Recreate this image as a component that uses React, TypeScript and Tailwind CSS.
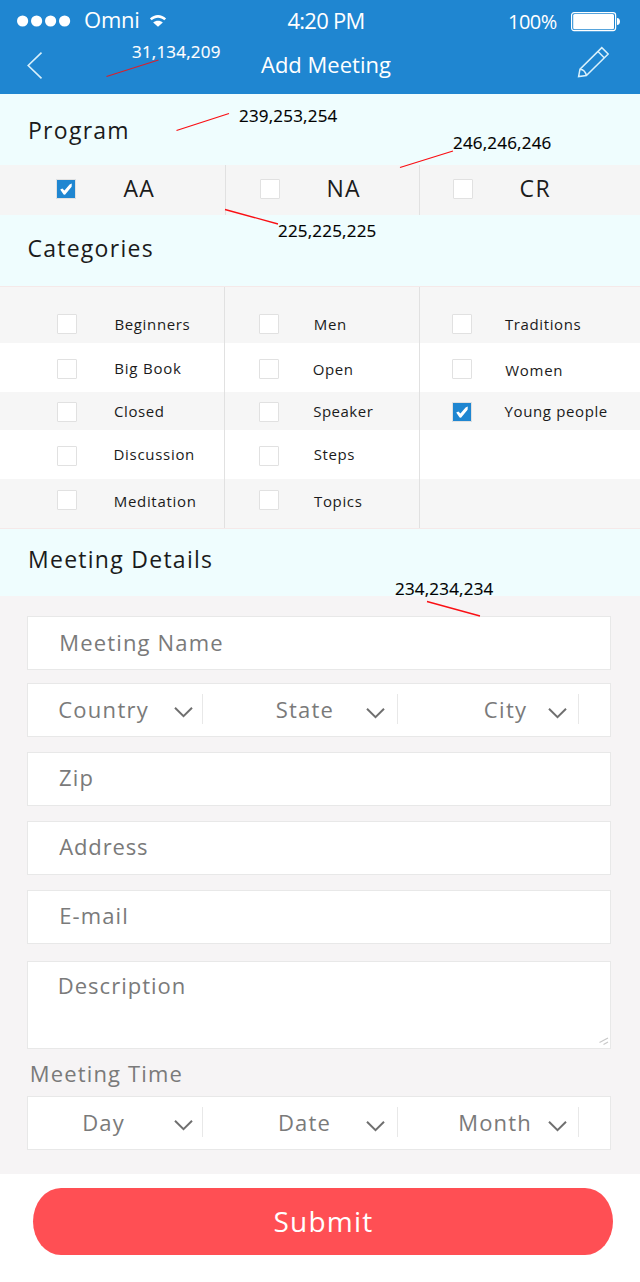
import React from "react";

type Item = { label: string; box: string; pos: string; checked?: boolean };

const programs: Item[] = [
  { label: "AA", box: "ml-[56px]", pos: "ml-[47.5px]", checked: true },
  { label: "NA", box: "ml-[34px]", pos: "ml-[46.5px]" },
  { label: "CR", box: "ml-[33px]", pos: "ml-[46.6px]" },
];

const rows: { row: string; boxTop: string; items: (Item | null)[] }[] = [
  {
    row: "h-[56px] bg-[#f6f6f6]",
    boxTop: "mt-[27px]",
    items: [
      { label: "Beginners", box: "ml-[57px]", pos: "ml-[37.4px] mt-[27px] tracking-[0.65px]" },
      { label: "Men", box: "ml-[34px]", pos: "ml-[34.7px] mt-[27px] tracking-[0.7px]" },
      { label: "Traditions", box: "ml-[32px]", pos: "ml-[33px] mt-[27px] tracking-[0.6px]" },
    ],
  },
  {
    row: "h-[49px] bg-white",
    boxTop: "mt-4",
    items: [
      { label: "Big Book", box: "ml-[57px]", pos: "ml-[37.2px] mt-[15px] tracking-[0.8px]" },
      { label: "Open", box: "ml-[34px]", pos: "ml-[33.7px] mt-[16px] tracking-[0.6px]" },
      { label: "Women", box: "ml-[32px]", pos: "ml-[33.3px] mt-[17px] tracking-[0.7px]" },
    ],
  },
  {
    row: "h-[38px] bg-[#f6f6f6]",
    boxTop: "mt-2.5",
    items: [
      { label: "Closed", box: "ml-[57px]", pos: "ml-[37px] mt-[9px] tracking-[0.6px]" },
      { label: "Speaker", box: "ml-[34px]", pos: "ml-[34.2px] mt-[9px] tracking-[0.5px]" },
      { label: "Young people", box: "ml-[32px]", pos: "ml-[32.5px] mt-[9px] tracking-[0.63px]", checked: true },
    ],
  },
  {
    row: "h-[49px] bg-white",
    boxTop: "mt-4",
    items: [
      { label: "Discussion", box: "ml-[57px]", pos: "ml-[36.5px] mt-[14px] tracking-[0.7px]" },
      { label: "Steps", box: "ml-[34px]", pos: "ml-[34.8px] mt-[14px] tracking-[0.6px]" },
      null,
    ],
  },
  {
    row: "h-[49px] bg-[#f6f6f6]",
    boxTop: "mt-[11px]",
    items: [
      { label: "Meditation", box: "ml-[57px]", pos: "ml-[36.7px] mt-[12px] tracking-[0.7px]" },
      { label: "Topics", box: "ml-[34px]", pos: "ml-[35px] mt-[12px] tracking-[0.65px]" },
      null,
    ],
  },
];

const swatches = [
  { text: "31,134,209", cls: "left-[132px] top-[40px] text-white" },
  { text: "239,253,254", cls: "left-[239px] top-[104px] text-black" },
  { text: "246,246,246", cls: "left-[453px] top-[131px] text-black" },
  { text: "225,225,225", cls: "left-[278px] top-[219px] text-black" },
  { text: "234,234,234", cls: "left-[395px] top-[577px] text-black" },
];

function Checkbox({ checked, className = "" }: { checked?: boolean; className?: string }) {
  return (
    <span
      className={`flex size-5 shrink-0 rounded-[1px] border border-[#e1e1e1] ${
        checked ? "bg-[#1f86d1]" : "bg-white"
      } ${className}`}
    >
      {checked && (
        <svg viewBox="0 0 18 18" className="size-[18px]">
          <path d="M3.2 9.4 5.4 8.6 7.4 10.6 12.6 4.6 14.8 3.4 14.6 6.8 8 14.8 6.6 14.6Z" fill="#fff" />
        </svg>
      )}
    </span>
  );
}

function Chevron({ className }: { className: string }) {
  return (
    <svg viewBox="0 0 20 12" className={`h-3 w-5 shrink-0 ${className}`} fill="none">
      <path d="M2 1.8 10.5 10.2 19 1.8" stroke="#6f6f6f" strokeWidth="2" />
    </svg>
  );
}

function SectionTitle({ children, className }: { children: string; className: string }) {
  return (
    <h2 className={`bg-[#effdfe] text-[23px] leading-8 tracking-[1.27px] text-[#1b1b1b] ${className}`}>{children}</h2>
  );
}

function Field({ children, className }: { children: string; className: string }) {
  return (
    <div className={`border border-[#e8e8e8] bg-white text-[22px] leading-[30px] ${className}`}>{children}</div>
  );
}

function SelectRow({ cells, className = "" }: { cells: { label: string; pos: string }[]; className?: string }) {
  return (
    <div
      className={`grid h-[54px] grid-cols-[175px_195px_181px] border border-[#e8e8e8] bg-white text-[22px] leading-[30px] ${className}`}
    >
      {cells.map((c, i) => (
        <div key={c.label} className="mt-2.5 flex h-[30px] items-start justify-between border-r border-[#e8e8e8]">
          <span className={c.pos}>{c.label}</span>
          <Chevron
            className={i === 0 ? "mt-3 mr-[9px]" : i === 1 ? "mt-[13px] mr-3" : "mt-[13px] mr-[11px]"}
          />
        </div>
      ))}
    </div>
  );
}

export default function App() {
  return (
    <div className="relative h-[1282px] w-[640px] overflow-hidden bg-white font-['Open_Sans',sans-serif] whitespace-nowrap">
      <header className="h-[94px] bg-[#1f86d1] text-[22px] leading-[30px] text-white">
        <div className="flex h-[42px] items-start">
          <svg viewBox="0 0 54 12" className="mt-[14.5px] ml-[17px] h-3 w-[54px]" fill="#fff">
            <circle cx="5.6" cy="6" r="5.6" />
            <circle cx="19.6" cy="6" r="5.6" />
            <circle cx="33.6" cy="6" r="5.6" />
            <circle cx="47.6" cy="6" r="5.6" />
          </svg>
          <span className="mt-1 ml-[13px] w-[58px] tracking-[-0.2px]">Omni</span>
          <svg viewBox="0 0 18 13" className="mt-[14px] ml-[7px] h-[13px] w-[18px]" fill="#fff">
            <path d="M.9 4.6C5.4-.3 12.6-.3 17.1 4.6L15.3 6.2C11.8 2.8 6.2 2.8 2.7 6.2Z" />
            <path d="M4.2 8.4C6.8 6.3 11.2 6.3 13.8 8.4L9 12.8Z" />
          </svg>
          <span className="mt-[5px] ml-[120.5px] w-[90px] tracking-[-0.75px]">4:20 PM</span>
          <span className="mt-2 ml-[130.5px] w-[60px] text-[20px] leading-[27px] tracking-[-0.5px]">100%</span>
          <svg viewBox="0 0 50 20" className="mt-3 ml-[3px] h-5 w-[50px]" fill="none">
            <rect x=".6" y=".6" width="44" height="18" rx="2.5" stroke="#fff" strokeWidth="1.2" />
            <rect x="2.2" y="2" width="40.8" height="15.2" rx="1.5" fill="#fff" />
            <path d="M46 6C50 6 50 13 46 13Z" fill="#fff" />
          </svg>
        </div>
        <div className="flex items-start">
          <svg viewBox="0 0 16 28" className="mt-[9.5px] ml-[27px] h-7 w-4" fill="none">
            <path d="M14.5 .6 1.2 13.5 14.5 26.4" stroke="#d8f0fb" strokeWidth="1.6" />
          </svg>
          <h1 className="mt-[7px] ml-[218px] w-[316px]">Add Meeting</h1>
          <svg viewBox="0 0 32 32" className="mt-1 h-8 w-8" fill="none" stroke="#d8f0fb" strokeWidth="1.5">
            <path d="M1.6 30.6 3 23.2 24.8 1.6 31.2 8 9.4 29.6ZM21 5.4 27.2 11.8M3 23.2C5.8 23.4 8.6 26 9.4 29.6" />
          </svg>
        </div>
      </header>

      <SectionTitle className="h-[71px] pt-5 pl-[28px]">Program</SectionTitle>
      <div className="grid h-[50px] grid-cols-[226px_194px_220px] bg-[#f5f5f5] text-[23px] leading-8 text-[#1b1b1b]">
        {programs.map((p, i) => (
          <label key={p.label} className={`flex items-start ${i < 2 ? "border-r border-[#e1e1e1]" : ""}`}>
            <Checkbox checked={p.checked} className={`mt-3.5 ${p.box}`} />
            <span className={`mt-[7px] tracking-[1.3px] ${p.pos}`}>{p.label}</span>
          </label>
        ))}
      </div>

      <SectionTitle className="h-[71px] pt-[17px] pl-[27.4px]">Categories</SectionTitle>
      <div className="border-y border-[#f5e9e9] text-[15px] leading-5 text-[#1b1b1b]">
        {rows.map((r, n) => (
          <div key={n} className={`grid grid-cols-[225px_195px_220px] ${r.row}`}>
            {r.items.map((it, i) => (
              <label key={i} className={`flex items-start ${i < 2 ? "border-r border-[#e1e1e1]" : ""}`}>
                {it && <Checkbox checked={it.checked} className={`${r.boxTop} ${it.box}`} />}
                {it && <span className={it.pos}>{it.label}</span>}
              </label>
            ))}
          </div>
        ))}
      </div>

      <SectionTitle className="h-[67px] pt-3.5 pl-[28px]">Meeting Details</SectionTitle>
      <form className="flex h-[578px] flex-col bg-[#f6f4f5] pt-5 pr-[29px] pl-[27px] text-[#7a7a7a]">
        <Field className="h-[54px] pt-[10px] pl-[31.3px] tracking-[1.15px]">Meeting Name</Field>
        <SelectRow
          className="mt-[13px]"
          cells={[
            { label: "Country", pos: "ml-[30.2px] tracking-[1.28px]" },
            { label: "State", pos: "ml-[72.8px] tracking-[1.2px]" },
            { label: "City", pos: "ml-[85.8px] tracking-[1.35px]" },
          ]}
        />
        <Field className="mt-[15px] h-[54px] pt-[9px] pl-[31px] tracking-[1.2px]">Zip</Field>
        <Field className="mt-[15px] h-[54px] pt-[9px] pl-[31.3px] tracking-[0.85px]">Address</Field>
        <Field className="mt-[15px] h-[54px] pt-[9px] pl-[31.3px] tracking-[1.1px]">E-mail</Field>
        <div className="mt-[17px] flex h-[88px] items-end justify-between border border-[#e8e8e8] bg-white text-[22px] leading-[30px] tracking-[1px]">
          <span className="h-[78px] pl-[29.8px]">Description</span>
          <svg viewBox="0 0 10 8" className="mr-px mb-[3px] h-2 w-2.5" fill="none" stroke="#c8c8c8" strokeWidth="1.2">
            <path d="M.5 5.5 9 1M4.5 7.5 9 5" />
          </svg>
        </div>
        <h3 className="mt-[9px] h-[38px] pl-[2.8px] text-[22px] leading-[30px] tracking-[1.15px]">Meeting Time</h3>
        <SelectRow
          cells={[
            { label: "Day", pos: "ml-[54.3px] tracking-[1.1px]" },
            { label: "Date", pos: "ml-[74.9px] tracking-[1.2px]" },
            { label: "Month", pos: "ml-[60.2px] tracking-[1.2px]" },
          ]}
        />
      </form>

      <footer className="flex pt-3.5 pl-[33px]">
        <button className="flex h-[67px] w-[580px] rounded-[28px/33.5px] bg-[#ff4f54] pt-[14px] pl-[240.5px] text-[28px] leading-[38px] tracking-[1.2px] text-white">
          Submit
        </button>
      </footer>

      {swatches.map((s) => (
        <span
          key={s.text}
          className={`absolute text-[17px] leading-[23px] tracking-[0.2px] [-webkit-text-stroke-width:0.15px] ${s.cls}`}
        >
          {s.text}
        </span>
      ))}
      <svg viewBox="0 0 640 640" className="pointer-events-none absolute top-0 left-0 size-[640px]" stroke="#fa0f14" strokeWidth="1.3">
        <path d="M106.5 76.5 158.5 60" stroke="#d8202c" />
        <path d="M176.5 130.5 229 113.5M400 167.5 453 151M225 209.5 278 224M427 601.5 480 616" />
      </svg>
    </div>
  );
}
